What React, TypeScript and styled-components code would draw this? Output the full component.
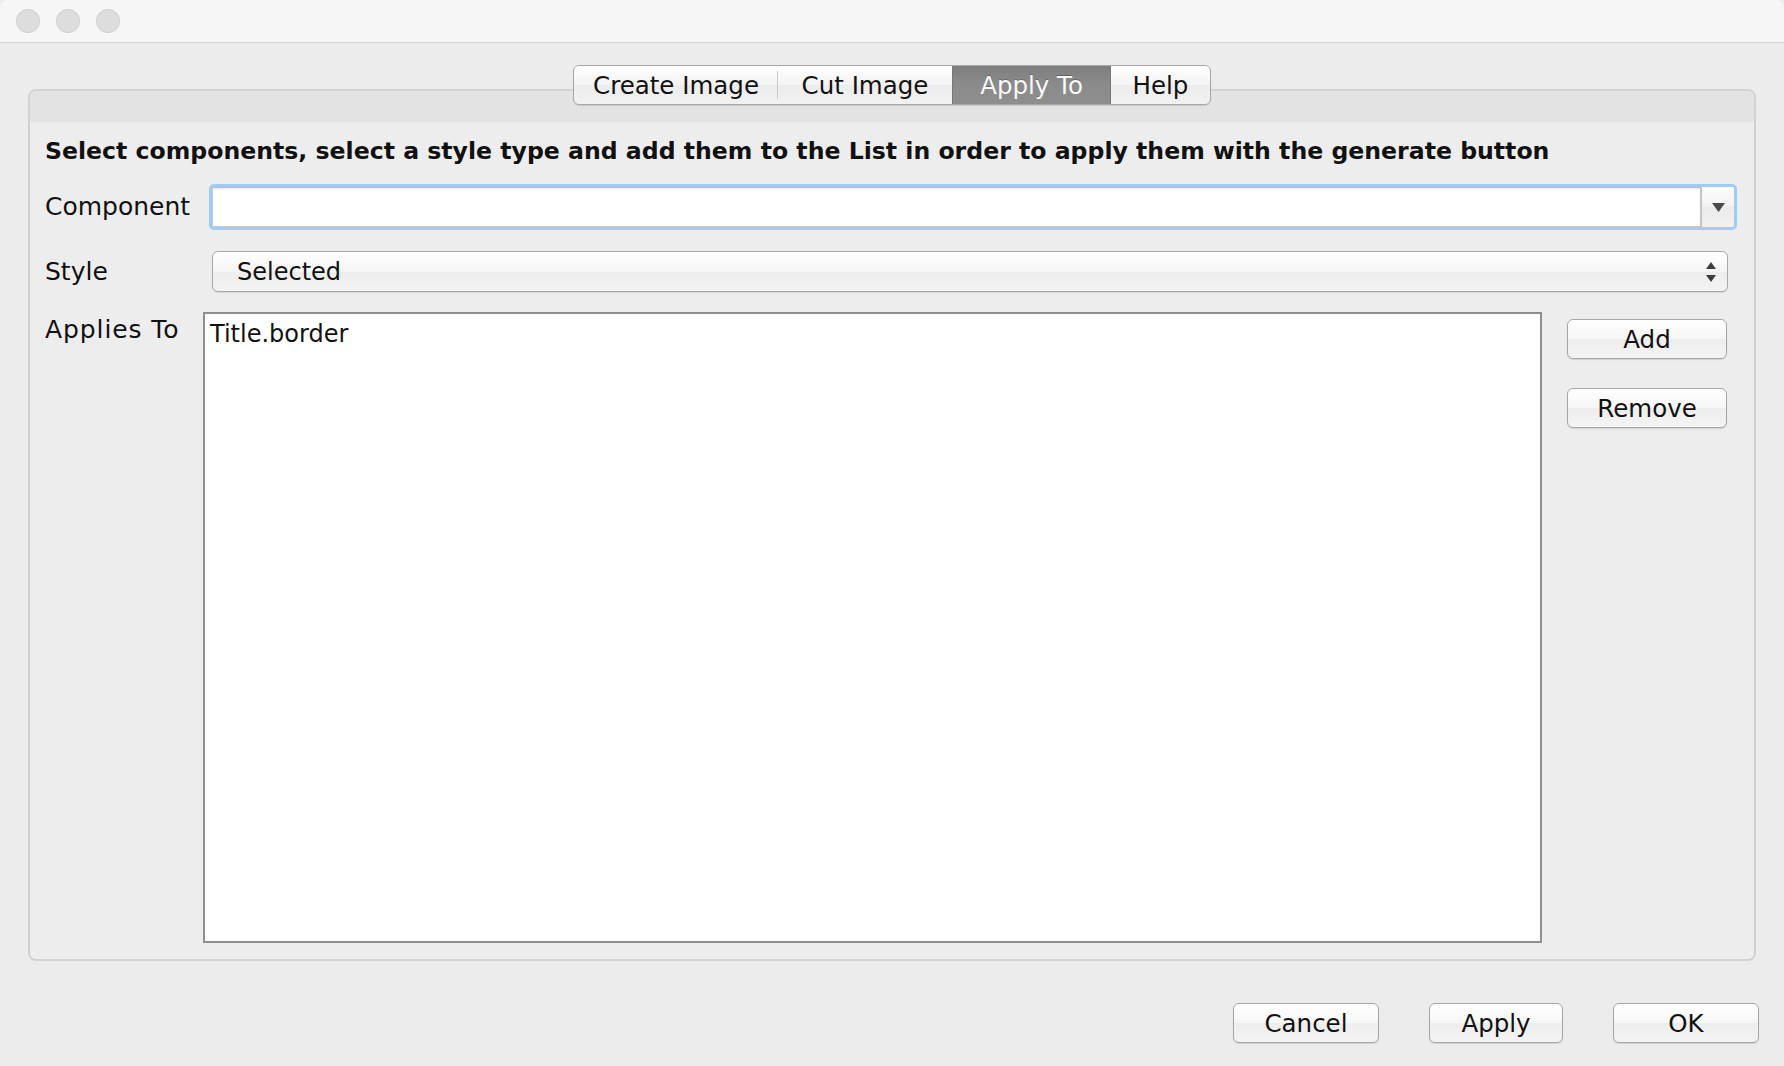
import React from "react";
import styled, { createGlobalStyle } from "styled-components";

const Global = createGlobalStyle`
  html, body { margin: 0; padding: 0; width: 1784px; height: 1066px; overflow: hidden; background: #ececec; }
  body { font-family: "DejaVu Sans", "Liberation Sans", sans-serif; color: #111; }
  * { box-sizing: border-box; }
`;

const Window = styled.div`
  width: 1784px;
  height: 1066px;
  display: flex;
  flex-direction: column;
  background: #ececec;
`;

const TitleBar = styled.div`
  height: 43px;
  flex: none;
  background: #f6f6f6;
  border-bottom: 1px solid #d3d3d3;
  display: flex;
  align-items: center;
  gap: 16px;
  padding-left: 16px;
  border-top-left-radius: 8px;
  border-top-right-radius: 8px;
`;

const Light = styled.span`
  width: 24px;
  height: 24px;
  border-radius: 50%;
  background: #dddddd;
  border: 1px solid #cdcdcd;
`;

const Body = styled.div`
  flex: 1;
  display: flex;
  flex-direction: column;
  padding: 22px 28px 0 28px;
`;

const TabStrip = styled.div`
  position: relative;
  z-index: 1;
  display: flex;
  justify-content: center;
  margin-bottom: -16px;
`;

const Tabs = styled.div`
  display: flex;
  height: 40px;
  border: 1px solid #a6a6a6;
  border-radius: 6px;
  overflow: hidden;
  background: linear-gradient(#ffffff, #f3f3f3 50%, #ececec 51%, #f2f2f2);
  box-shadow: 0 1px 1px rgba(0, 0, 0, 0.12);
`;

const Tab = styled.div<{ $active?: boolean; $w: number; $sep?: boolean }>`
  width: ${(p) => p.$w}px;
  display: flex;
  align-items: center;
  justify-content: center;
  font-size: 24.5px;
  position: relative;
  color: ${(p) => (p.$active ? "#fafafa" : "#111")};
  background: ${(p) =>
    p.$active ? "linear-gradient(#7e7e7e, #8b8b8b 50%, #8e8e8e)" : "transparent"};
  border-left: ${(p) => (p.$active ? "1px solid #777" : "none")};
  border-right: ${(p) => (p.$active ? "1px solid #777" : "none")};
  text-shadow: ${(p) => (p.$active ? "0 -1px 0 rgba(0,0,0,0.25)" : "none")};
  &::after {
    content: "";
    display: ${(p) => (p.$sep ? "block" : "none")};
    position: absolute;
    right: 0;
    top: 5px;
    bottom: 5px;
    width: 1px;
    background: #c8c8c8;
  }
`;

const Panel = styled.div`
  height: 872px;
  border: 2px solid #d2d2d2;
  border-radius: 8px;
  background: #ededed;
  display: flex;
  flex-direction: column;
  overflow: hidden;
`;

const PanelHeader = styled.div`
  height: 31px;
  flex: none;
  background: #e3e3e3;
`;

const PanelContent = styled.div`
  flex: 1;
  display: flex;
  flex-direction: column;
  padding: 13px 0 16px 15px;
`;

const Heading = styled.div`
  font-weight: bold;
  font-size: 23.6px;
  line-height: 32px;
  height: 32px;
  white-space: nowrap;
`;

const Row = styled.div<{ $mt: number; $grow?: boolean }>`
  display: grid;
  grid-template-columns: 164px 1fr;
  margin-top: ${(p) => p.$mt}px;
  ${(p) => (p.$grow ? "flex: 1;" : "")}
`;

const Label = styled.div<{ $h: number; $ls?: number }>`
  font-size: 25px;
  line-height: ${(p) => p.$h}px;
  white-space: nowrap;
  letter-spacing: ${(p) => p.$ls ?? 0}px;
`;

const Combo = styled.div`
  height: 46px;
  margin-right: 17px;
  border: 3px solid #9dcdf6;
  border-radius: 5px;
  display: flex;
  background: #fff;
`;

const ComboField = styled.div`
  flex: 1;
  background: #fff;
  border: 1px solid #c9c9c9;
  border-top-color: #bdbdbd;
  box-shadow: inset 0 2px 2px rgba(0, 0, 0, 0.06);
`;

const ComboButton = styled.div`
  width: 33px;
  border-left: 1px solid #c0c0c0;
  background: linear-gradient(#fdfdfd, #f2f2f2 50%, #ebebeb 51%, #f1f1f1);
  display: flex;
  align-items: center;
  justify-content: center;
  border-radius: 0 3px 3px 0;
`;

const Select = styled.div`
  height: 41px;
  margin: 0 26px 0 3px;
  border: 1px solid #a8a8a8;
  border-radius: 6px;
  background: linear-gradient(#ffffff, #f5f5f5 50%, #ededed 51%, #f3f3f3);
  box-shadow: 0 1px 1px rgba(0, 0, 0, 0.1);
  display: flex;
  align-items: center;
  justify-content: space-between;
  padding: 0 10px 0 24px;
  font-size: 24px;
`;

const ListArea = styled.div`
  display: flex;
  margin-left: -6px;
  gap: 25px;
  padding-right: 27px;
`;

const List = styled.div`
  flex: 1;
  background: #fff;
  border: 2px solid #8f8f8f;
  padding: 5px 5px;
  font-size: 24px;
  line-height: 30px;
`;

const SideButtons = styled.div`
  width: 160px;
  display: flex;
  flex-direction: column;
  gap: 29px;
  padding-top: 7px;
`;

const Button = styled.button<{ $w?: number }>`
  width: ${(p) => (p.$w ? `${p.$w}px` : "100%")};
  height: 40px;
  border: 1px solid #a6a6a6;
  border-radius: 6px;
  background: linear-gradient(#ffffff, #f6f6f6 50%, #ededed 51%, #f4f4f4);
  box-shadow: 0 1px 1px rgba(0, 0, 0, 0.12);
  font-family: "DejaVu Sans", "Liberation Sans", sans-serif;
  font-size: 24.5px;
  color: #111;
  padding: 0;
  display: flex;
  align-items: center;
  justify-content: center;
`;

const Footer = styled.div`
  display: flex;
  justify-content: flex-end;
  gap: 50px;
  margin-top: 42px;
  margin-right: -3px;
`;

export default function App() {
  return (
    <Window>
      <Global />
      <TitleBar>
        <Light />
        <Light />
        <Light />
      </TitleBar>
      <Body>
        <TabStrip>
          <Tabs>
            <Tab $w={204} $sep>Create Image</Tab>
            <Tab $w={174}>Cut Image</Tab>
            <Tab $w={159} $active>Apply To</Tab>
            <Tab $w={99}>Help</Tab>
          </Tabs>
        </TabStrip>
        <Panel>
          <PanelHeader />
          <PanelContent>
            <Heading>
              Select components, select a style type and add them to the List in order to apply them with the generate button
            </Heading>
            <Row $mt={17}>
              <Label $h={46}>Component</Label>
              <Combo>
                <ComboField />
                <ComboButton>
                  <svg width="15" height="11" viewBox="0 0 15 11">
                    <path d="M1 1 L14 1 L7.5 10 Z" fill="#4a4a4a" />
                  </svg>
                </ComboButton>
              </Combo>
            </Row>
            <Row $mt={21}>
              <Label $h={41}>Style</Label>
              <Select>
                <span>Selected</span>
                <svg width="12" height="22" viewBox="0 0 12 22">
                  <path d="M6 1 L11 8 L1 8 Z" fill="#3c3c3c" />
                  <path d="M1 14 L11 14 L6 21 Z" fill="#3c3c3c" />
                </svg>
              </Select>
            </Row>
            <Row $mt={20} $grow>
              <Label $h={36} $ls={0.9}>Applies To</Label>
              <ListArea>
                <List>Title.border</List>
                <SideButtons>
                  <Button>Add</Button>
                  <Button>Remove</Button>
                </SideButtons>
              </ListArea>
            </Row>
          </PanelContent>
        </Panel>
        <Footer>
          <Button $w={146}>Cancel</Button>
          <Button $w={134}>Apply</Button>
          <Button $w={146}>OK</Button>
        </Footer>
      </Body>
    </Window>
  );
}
